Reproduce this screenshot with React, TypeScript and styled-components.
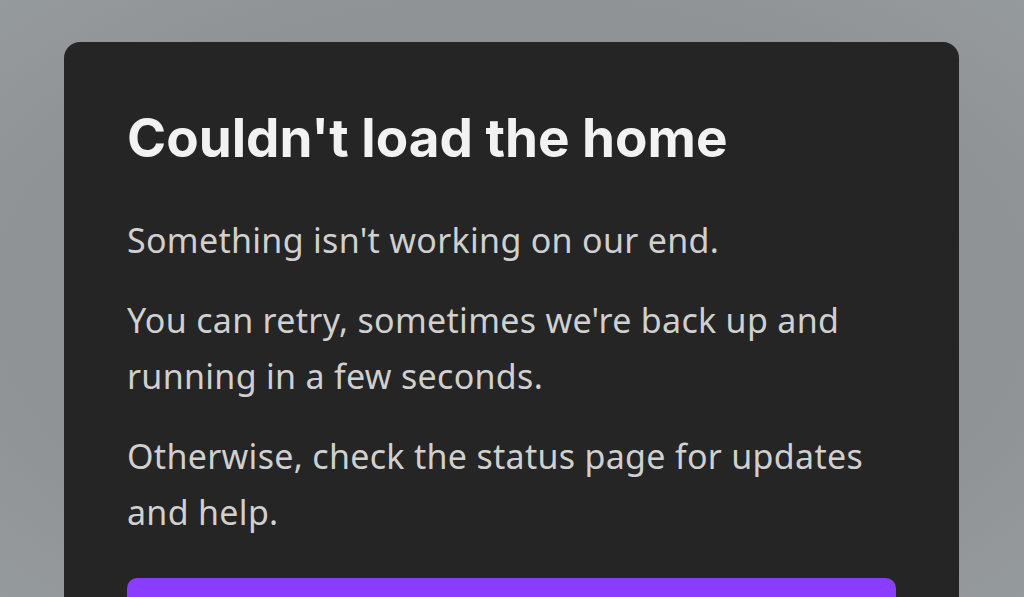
import React from 'react';
import styled, { createGlobalStyle } from 'styled-components';

const GlobalStyle = createGlobalStyle`
  html, body {
    margin: 0;
    padding: 0;
    background: #8e9295;
    overflow: hidden;
  }
`;

const Page = styled.div`
  width: 1024px;
  height: 597px;
  box-sizing: border-box;
  padding: 42px 65px 0 64px;
  background: radial-gradient(ellipse at center, #8c9093 0%, #8f9396 70%, #959a9d 100%);
  overflow: hidden;
`;

const Card = styled.div`
  background: #252525;
  border-radius: 16px;
  padding: 68px 63px 60px 63px;
  display: flex;
  flex-direction: column;
  min-height: 600px;
`;

const Title = styled.h1`
  margin: 0 0 46px 0;
  font-family: "Inter", "Lato", sans-serif;
  font-weight: 700;
  font-size: 53px;
  line-height: 56px;
  letter-spacing: 0;
  color: #f2f2f2;
`;

const Paragraph = styled.p`
  margin: 0 0 24px 0;
  font-family: "Noto Sans", "Open Sans", sans-serif;
  font-weight: 400;
  font-size: 34px;
  line-height: 56px;
  letter-spacing: 0.3px;
  color: #d0d0d0;
`;

const Button = styled.button`
  margin-top: 14px;
  height: 96px;
  border: none;
  border-radius: 10px;
  background: #8b3dff;
  color: #ffffff;
  font-family: "Noto Sans", sans-serif;
  font-size: 26px;
  font-weight: 600;
  padding-top: 56px;
`;

export default function App() {
  return (
    <>
      <GlobalStyle />
      <Page>
        <Card>
          <Title>Couldn't load the home</Title>
          <Paragraph>Something isn't working on our end.</Paragraph>
          <Paragraph>
            You can retry, sometimes we're back up and
            <br />
            running in a few seconds.
          </Paragraph>
          <Paragraph>
            Otherwise, check the status page for updates
            <br />
            and help.
          </Paragraph>
          <Button>Retry</Button>
        </Card>
      </Page>
    </>
  );
}
